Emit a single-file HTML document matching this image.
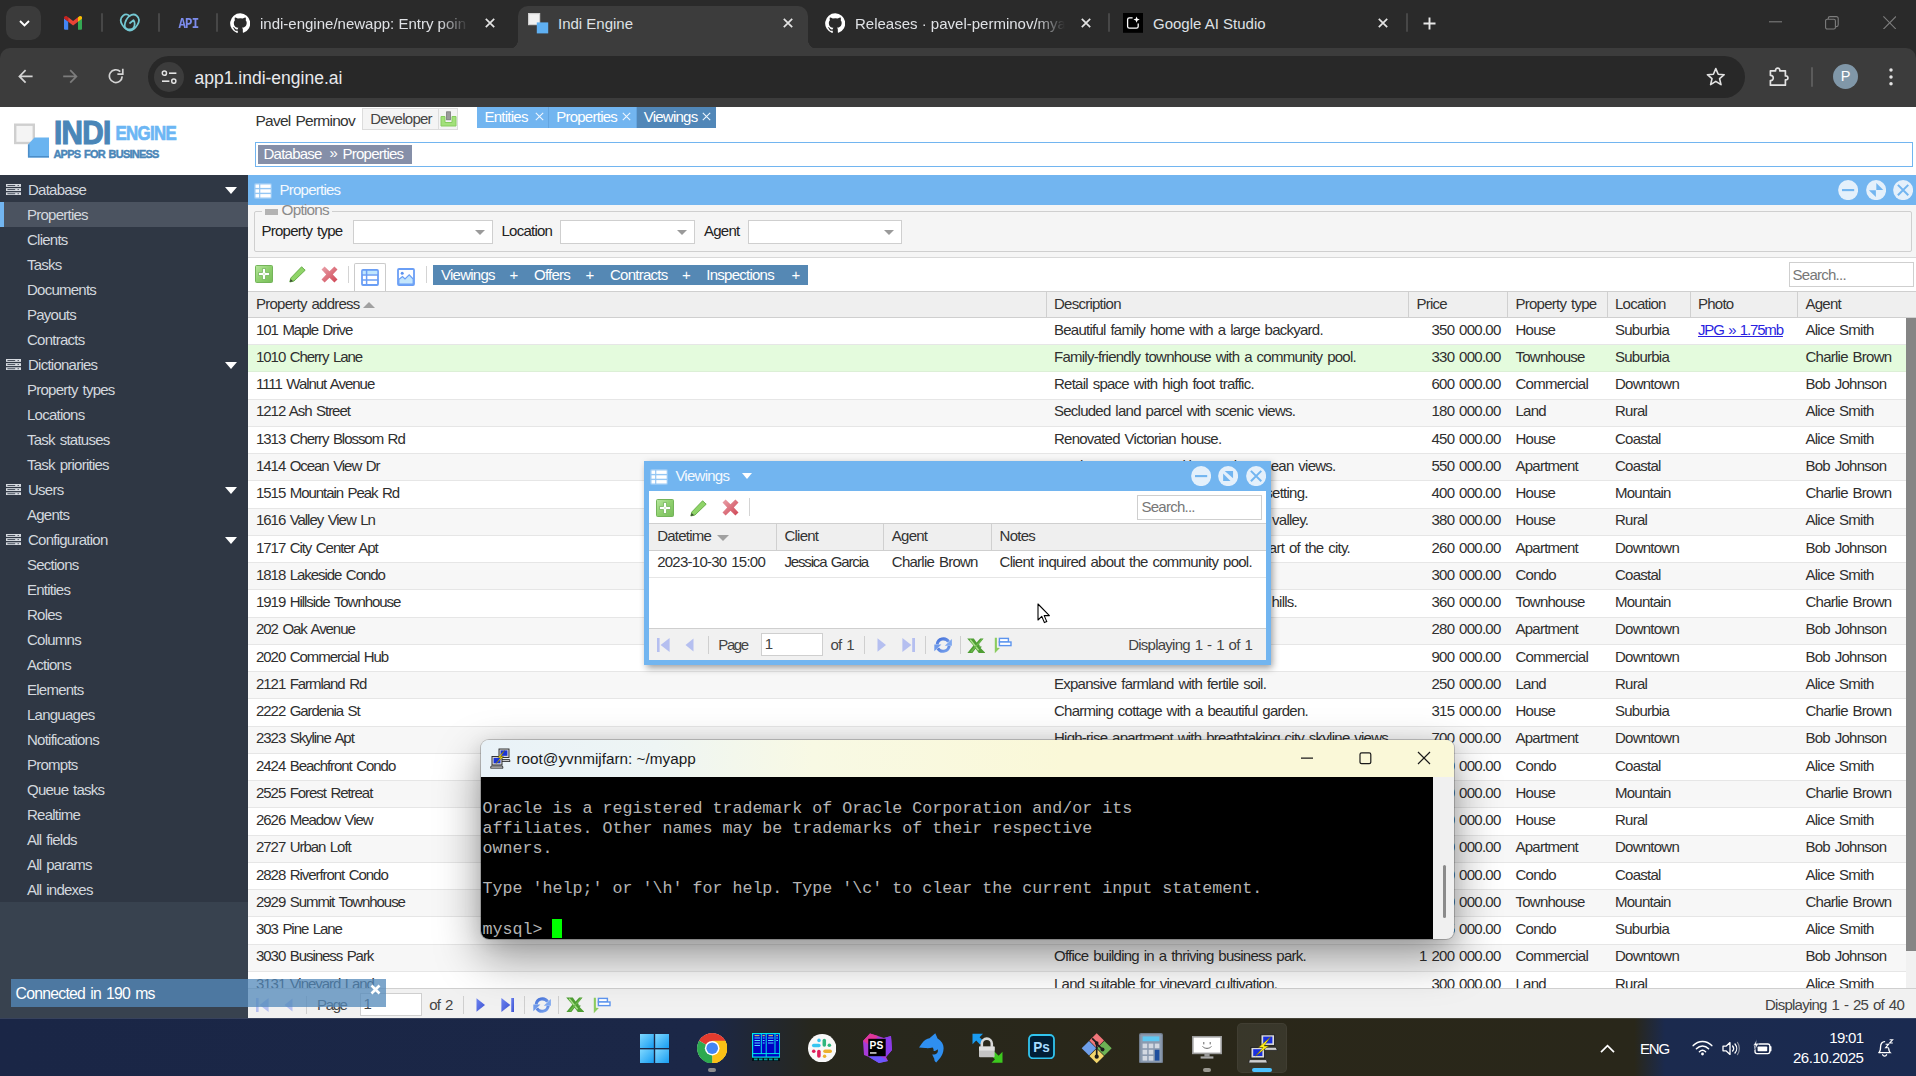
<!DOCTYPE html>
<html><head><meta charset="utf-8"><title>Indi Engine</title><style>*{box-sizing:border-box;margin:0;padding:0}
html,body{width:1916px;height:1076px;overflow:hidden;background:#fff;font-family:"Liberation Sans",sans-serif}
body{position:relative}
.abs{position:absolute}
/* ---------- chrome ---------- */
#tabstrip{position:absolute;left:0;top:0;width:1916px;height:62px;background:#2a2a2a}
#toolbar{position:absolute;left:0;top:48px;width:1916px;height:58.6px;background:#3c3c3c;border-radius:10px 10px 0 0}
#omni{position:absolute;left:148px;top:8.2px;width:1597px;height:41.6px;border-radius:21px;background:#282828}
.tabt{position:absolute;top:15px;font-size:15px;color:#dfe1e5;white-space:nowrap;line-height:18px}
#atab{position:absolute;left:518px;top:5.5px;width:290px;height:43px;background:#3c3c3c;border-radius:10px 10px 0 0}
#atab:before,#atab:after{content:"";position:absolute;bottom:0;width:10px;height:10px}
#atab:before{left:-10px;background:radial-gradient(circle at 0 0,transparent 10px,#3c3c3c 10.5px)}
#atab:after{right:-10px;background:radial-gradient(circle at 100% 0,transparent 10px,#3c3c3c 10.5px)}
.tsep{position:absolute;top:12.8px;width:2px;height:19.4px;background:#474747;border-radius:1px}
.tx{position:absolute;top:16px;width:14px;height:14px}
/* ---------- app ---------- */
#app{position:absolute;left:0;top:0;width:1916px;height:1018px;background:#fff;overflow:hidden;font-size:15px;letter-spacing:-0.75px;word-spacing:1.4px;color:#222}
#side{position:absolute;left:0;top:175px;width:248px;height:843px;background:#38424f}
#sidein{position:absolute;left:0;top:0;width:248px;height:727px;background:#2f3744}
.sh,.si{position:absolute;left:0;width:248px;height:25px;line-height:25px;color:#d3d8de;white-space:nowrap}
.sh span{position:absolute;left:28px;top:0}
.si span{position:absolute;left:27px;top:0}
.shi{position:absolute;left:6px;top:7px}
.tri{position:absolute;left:225px;top:10px;width:0;height:0;border-left:6px solid transparent;border-right:6px solid transparent;border-top:7px solid #fff}
.ssel{background:#4b5360;border-left:4px solid #72b5f0}
.ssel span{left:23px}
#main{position:absolute;left:248px;top:175px;width:1668px;height:843px;background:#fff}
#ttl{position:absolute;left:0;top:0;width:1668px;height:29.8px;background:#72b5f0;color:#fff}
#opts{position:absolute;left:0;top:30px;width:1668px;height:54px;background:#f5f5f5}
#tb{position:absolute;left:0;top:82px;width:1668px;height:35px;background:#fff;border-top:1px solid #d8d8d8}
#gh{position:absolute;left:0;top:116px;width:1668px;height:27px;background:#efefef;border-top:1px solid #cfcfcf;border-bottom:1px solid #cfcfcf}
#gh span{position:absolute;top:-0.9px;line-height:25px;white-space:nowrap;color:#333}
#gh i{position:absolute;top:0;width:1px;height:25px;background:#d0d0d0}
#grid{position:absolute;left:0;top:142.5px;width:1658px;height:670.5px;overflow:hidden;background:#fff}
.row{position:absolute;left:0;width:1658px;height:27.25px;border-bottom:1px solid #e6e6e6;background:#fff}
.row.alt{background:#f7f7f7}
.row.sel{background:#e4fbdd;border-bottom-color:#dcefd6}
.c{position:absolute;top:-1.35px;line-height:26px;white-space:nowrap;color:#2f2f2f}
.lnk{color:#2a1fe0;text-decoration:underline}
#vsb{position:absolute;left:1658px;top:143px;width:10px;height:670px;background:#f1f1f1}
#vsb div{position:absolute;left:0;top:0;width:10px;height:633.3px;background:#858585}
#pg{position:absolute;left:0;top:813px;width:1668px;height:30px;background:#f1f1f1;border-top:1px solid #cfcfcf}
/* ---------- taskbar ---------- */
#task{position:absolute;left:0;top:1018px;width:1916px;height:58px;box-shadow:inset 0 1px 0 rgba(255,255,255,0.13);background:linear-gradient(90deg,#1a2646 0%,#1b2747 37%,#27271d 42.5%,#2a2719 60%,#29271a 85.3%,#1b2a4e 86.9%,#1a2a50 100%)}

#tabstrip{z-index:5}#toolbar{z-index:6}
/* header */
#hdr{position:absolute;left:0;top:0;width:1916px;height:175px}
#hdr .t{position:absolute;white-space:nowrap;line-height:20px}
#devbtn{position:absolute;left:362.2px;top:108px;width:96px;height:22px;background:#f4f4f4;border:1px solid #dcdcdc}
#devbtn i{position:absolute;left:75px;top:0;width:1px;height:20px;background:#dcdcdc}
.atab{position:absolute;top:107px;height:21px;background:#72b5f0;color:#fff;line-height:20px;white-space:nowrap;border-right:1px solid #63a5e0}
.atab b{font-weight:normal;position:absolute;top:0}
#bc{position:absolute;left:255px;top:142px;width:1658px;height:25px;border:1px solid #72b5f0;background:#fff}
#bcchip{position:absolute;left:257.5px;top:144.5px;width:154px;height:19.5px;background:#858fa8;color:#fff;line-height:19px;white-space:nowrap}
/* title bar */
#ttl span{position:absolute;left:31.5px;top:0;line-height:29px;color:#f4f9fe}
.wbtn{position:absolute;width:19px;height:19px}
/* options */
#fs{position:absolute;left:6px;top:36px;width:1658px;height:41px;border:1px solid #cfcfcf;border-radius:2px}
#opts .lb{position:absolute;top:46px;line-height:20px;white-space:nowrap;color:#222}
.cmb{position:absolute;top:45px;height:24px;background:#fff;border:1px solid #cfcfcf}
.cmb i{position:absolute;right:7px;top:9px;width:0;height:0;border-left:5.5px solid transparent;border-right:5.5px solid transparent;border-top:5.5px solid #9a9a9a}
/* toolbar */
.sep{position:absolute;width:1px;background:#d4d4d4}
#chip{position:absolute;left:185px;top:6.5px;width:375px;height:20.2px;background:#5588b4;color:#fff;line-height:19px;white-space:nowrap}
#chip span{position:absolute;top:0}
.srch{position:absolute;background:#fff;border:1px solid #cfcfcf;color:#777;white-space:nowrap}

/* viewings window */
#vw{position:absolute;left:644px;top:461px;width:627px;height:204px;background:#72b5f0;box-shadow:1.5px 3px 7px rgba(0,0,0,0.38);z-index:10}
#vwb{position:absolute;left:5px;top:30px;width:617px;height:169px;background:#fff}
#vgh{position:absolute;left:5px;top:62px;width:617px;height:27.5px;background:#efefef;border-top:1px solid #cfcfcf;border-bottom:1px solid #cfcfcf}
#vgh span{position:absolute;top:-0.9px;line-height:25px;white-space:nowrap;color:#333}
#vgh i{position:absolute;top:0;width:1px;height:25.5px;background:#d0d0d0}
#vrow{position:absolute;left:5px;top:89.5px;width:617px;height:27px;border-bottom:1px solid #e6e6e6}
#vrow span{position:absolute;top:-1.4px;line-height:25px;white-space:nowrap;color:#2f2f2f}
#vpg{position:absolute;left:5px;top:167.4px;width:617px;height:31.6px;background:#f1f1f1;border-top:1px solid #cfcfcf}
#note{position:absolute;left:11px;top:979px;width:375px;height:28px;background:rgba(84,138,186,0.76);z-index:12}

/* putty */
#pty{position:absolute;left:480.5px;top:739.5px;width:973.5px;height:199.5px;border-radius:8px;background:#f0f0f0;overflow:hidden;z-index:20;box-shadow:0 0 0 1px rgba(0,0,0,0.2),0 18px 46px rgba(0,0,0,0.40),0 3px 18px rgba(0,0,0,0.10)}
#ptyt{position:absolute;left:0;top:0;width:974px;height:37.3px;background:linear-gradient(90deg,#e9f2f8 0%,#eef5f4 18%,#f8f9e4 34%,#faf8d8 60%,#faf8d8 100%)}
#ptyb{position:absolute;left:0;top:37.3px;width:952.7px;height:163px;background:#000;overflow:hidden}
#ptyb pre{position:absolute;left:2px;top:2.1px;margin:0;font-family:"Liberation Mono",monospace;font-size:16.67px;line-height:20px;color:#b4b4b4;letter-spacing:0}
#ptyb pre i{display:inline-block;width:10px;height:19px;background:#00ff00;vertical-align:-4px}

.tt{position:absolute;font-size:15px;line-height:20px;color:#fff;white-space:nowrap}
</style></head>
<body>
<div id="tabstrip">
<div id="atab"></div>
<div class="abs" style="left:6px;top:6px;width:34.6px;height:33.8px;border-radius:10px;background:#3b3b3b"></div>
<svg class="abs" style="left:18.5px;top:20px" width="11" height="7" viewBox="0 0 11 7"><path d="M1 1L5.5 5.4L10 1" fill="none" stroke="#fff" stroke-width="1.9"/></svg>
<svg class="abs" style="left:64px;top:15.8px" width="18.2" height="14" viewBox="0 0 18.2 14"><path d="M0 2.2V12.6A1.2 1.2 0 0 0 1.2 13.8H4.2V5.4Z" fill="#4285f4"/><path d="M18.2 2.2V12.6A1.2 1.2 0 0 1 17 13.8H14V5.4Z" fill="#34a853"/><path d="M14 1.3V5.8L18.2 2.6V1.9C18.2 0.2 16.300 -0.500 15.100 0.400Z" fill="#fbbc04"/><path d="M4.200 1.300V5.800L0 2.600V1.900C0 0.200 1.900 -0.500 3.100 0.400Z" fill="#c5221f"/><path d="M4.200 1.300L9.100 5L14 1.300V5.800L9.100 9.500L4.200 5.800Z" fill="#ea4335"/></svg>
<i class="tsep" style="left:101.4px"></i>
<svg class="abs" style="left:119.3px;top:13.1px" width="21.6" height="19.8" viewBox="-0.8 -0.9 21.6 19.8"><g fill="none" stroke="#74c8d3" stroke-width="1.75" stroke-linecap="round" stroke-linejoin="round"><path d="M9.7 2C8 0.5 5.2 0.2 3.2 1.8C0.600 3.900 0.400 7.600 2.500 11C4.600 14.300 7.600 16.700 10.100 16.700C12.600 16.700 15.600 14.300 17.600 11C19.700 7.600 19.500 3.900 16.900 1.800C14.900 0.200 12 0.500 9.700 2"/><path d="M9.700 2C7.400 4 5.300 7.800 4.900 11.300C4.700 14.200 7.200 15.600 10.100 15.600C12.900 15.600 14.700 13.600 14.900 10.200C14.900 8.700 14.600 7.300 13.700 6.300L10.200 9.100"/></g></svg>
<i class="tsep" style="left:158.4px"></i>
<span class="abs" style="left:178.4px;top:17px;font-family:'Liberation Mono',monospace;font-weight:bold;font-size:12.4px;line-height:17px;color:#7d8cec;letter-spacing:-0.75px;transform:scaleY(1.12);transform-origin:0 50%">API</span>
<i class="tsep" style="left:216.4px"></i>
<svg class="abs" style="left:229.7px;top:12.8px" width="20.6" height="20.2" viewBox="0 0 24 24"><path fill="#fff" d="M12 .3a12 12 0 0 0-3.8 23.4c.6.1.8-.3.8-.6v-2c-3.3.7-4-1.6-4-1.6-.6-1.4-1.400-1.800-1.400-1.800-1-.7.100-.7.100-.7 1.200.1 1.800 1.200 1.800 1.200 1 1.800 2.800 1.300 3.500 1 .100-.8.400-1.300.800-1.600-2.700-.300-5.500-1.300-5.500-6 0-1.200.500-2.300 1.300-3.100-.200-.400-.600-1.600 0-3.200 0 0 1-.300 3.400 1.200a11.500 11.500 0 0 1 6 0c2.300-1.500 3.300-1.200 3.300-1.200.700 1.700.200 2.900.100 3.200.800.800 1.200 1.900 1.200 3.100 0 4.600-2.800 5.600-5.500 5.900.500.400.900 1.100.900 2.200v3.300c0 .300.100.700.800.600A12 12 0 0 0 12 .3"/></svg>
<svg class="abs" style="left:485.3px;top:18.2px" width="10" height="10" viewBox="0 0 10 10"><path d="M0.8 0.8L9.2 9.2M9.2 0.8L0.8 9.2" stroke="#e3e3e3" stroke-width="1.7" fill="none"/></svg>
<svg class="abs" style="left:527.5px;top:12.5px" width="21" height="21" viewBox="0 0 21 21"><rect x="0.6" y="0.6" width="11" height="11" fill="#f1f1f1" stroke="#cfcfcf" stroke-width="1.2"/><rect x="8.8" y="9.4" width="11.400" height="11" fill="#5fb0f2"/></svg>
<svg class="abs" style="left:782.8px;top:18.2px" width="10" height="10" viewBox="0 0 10 10"><path d="M0.8 0.8L9.2 9.2M9.2 0.8L0.8 9.2" stroke="#e3e3e3" stroke-width="1.7" fill="none"/></svg>
<svg class="abs" style="left:824.7px;top:12.8px" width="20.6" height="20.2" viewBox="0 0 24 24"><path fill="#fff" d="M12 .3a12 12 0 0 0-3.8 23.4c.6.1.8-.3.8-.6v-2c-3.3.7-4-1.6-4-1.6-.6-1.4-1.400-1.800-1.400-1.800-1-.7.100-.7.100-.7 1.200.1 1.800 1.200 1.800 1.200 1 1.800 2.800 1.300 3.500 1 .100-.8.400-1.300.800-1.600-2.700-.300-5.500-1.300-5.500-6 0-1.200.500-2.300 1.300-3.100-.200-.400-.600-1.600 0-3.200 0 0 1-.300 3.400 1.200a11.500 11.500 0 0 1 6 0c2.300-1.500 3.300-1.200 3.300-1.200.700 1.700.200 2.900.100 3.200.800.800 1.200 1.900 1.200 3.100 0 4.600-2.800 5.600-5.500 5.900.500.400.900 1.100.900 2.200v3.300c0 .300.100.700.800.600A12 12 0 0 0 12 .3"/></svg>
<svg class="abs" style="left:1081px;top:18.2px" width="10" height="10" viewBox="0 0 10 10"><path d="M0.8 0.8L9.2 9.2M9.2 0.8L0.8 9.2" stroke="#e3e3e3" stroke-width="1.7" fill="none"/></svg>
<i class="tsep" style="left:1108.3px"></i>
<svg class="abs" style="left:1122.7px;top:12.9px" width="20.3" height="19.8" viewBox="0 0 20.3 19.8"><rect width="20.3" height="19.8" fill="#000"/><path d="M9.600 4.800H6.400A1.800 1.800 0 0 0 4.600 6.600V13.400A1.800 1.800 0 0 0 6.400 15.200H13.400A1.800 1.800 0 0 0 15.200 13.400V10.600" fill="none" stroke="#fff" stroke-width="1.300"/><path d="M13.600 3.400L14.500 5.700L16.800 6.600L14.500 7.500L13.600 9.800L12.700 7.500L10.400 6.600L12.700 5.700Z" fill="#fff"/></svg>
<svg class="abs" style="left:1378px;top:18.2px" width="10" height="10" viewBox="0 0 10 10"><path d="M0.8 0.8L9.2 9.2M9.2 0.8L0.8 9.2" stroke="#e3e3e3" stroke-width="1.7" fill="none"/></svg>
<i class="tsep" style="left:1406.4px"></i>
<svg class="abs" style="left:1422.5px;top:17px" width="13" height="13" viewBox="0 0 13 13"><path d="M6.500 0.500V12.500M0.500 6.500H12.500" stroke="#e8e8e8" stroke-width="1.900" fill="none"/></svg>
<svg class="abs" style="left:1768.8px;top:21px" width="13.4" height="2" viewBox="0 0 13.4 2"><path d="M0 0.800H13.400" stroke="#7d7d7d" stroke-width="1.100"/></svg>
<svg class="abs" style="left:1824.6px;top:15.6px" width="14" height="14" viewBox="0 0 14 14"><rect x="0.600" y="3.200" width="9.800" height="9.800" rx="1.600" fill="none" stroke="#7d7d7d" stroke-width="1.100"/><path d="M3.200 3V2.400A1.800 1.800 0 0 1 5 0.600H11.400A1.800 1.800 0 0 1 13.200 2.400V8.800A1.800 1.800 0 0 1 11.400 10.600H10.800" fill="none" stroke="#7d7d7d" stroke-width="1.100"/></svg>
<svg class="abs" style="left:1882.8px;top:15.8px" width="13.4" height="13.6" viewBox="0 0 13.4 13.6"><path d="M0.400 0.400L13 13.200M13 0.400L0.400 13.200" stroke="#7d7d7d" stroke-width="1.100" fill="none"/></svg>
<span class="tabt" style="left:260px;width:209px;overflow:hidden;-webkit-mask-image:linear-gradient(90deg,#000 86%,transparent 100%)">indi-engine/newapp: Entry poin</span>
<span class="tabt" style="left:558px">Indi Engine</span>
<span class="tabt" style="left:855px;width:210px;overflow:hidden;-webkit-mask-image:linear-gradient(90deg,#000 86%,transparent 100%)">Releases · pavel-perminov/mya</span>
<span class="tabt" style="left:1153px">Google AI Studio</span>
</div>
<div id="toolbar">
<div id="omni"></div>
<svg class="abs" style="left:18.3px;top:21.400000000000006px" width="14.8" height="14.8" viewBox="0 0 14.8 14.8"><path d="M14.600 7.400H1.600M7.600 1.200L1.400 7.400L7.600 13.600" fill="none" stroke="#d4d4d4" stroke-width="1.700"/></svg>
<svg class="abs" style="left:63px;top:21.400000000000006px" width="14.8" height="14.8" viewBox="0 0 14.8 14.8"><path d="M0.200 7.400H13.200M7.200 1.200L13.400 7.400L7.200 13.600" fill="none" stroke="#7c7c7c" stroke-width="1.700"/></svg>
<svg class="abs" style="left:107.6px;top:20.400000000000006px" width="16.2" height="16" viewBox="0 0 16.2 16"><path d="M14.200 8.400A6.400 6.400 0 1 1 12.300 3.600" fill="none" stroke="#d4d4d4" stroke-width="1.700"/><path d="M14.800 0.800V6.200H9.400" fill="none" stroke="#d4d4d4" stroke-width="1.700"/></svg>
<div class="abs" style="left:154.200px;top:14.100000000000001px;width:30px;height:30px;border-radius:15px;background:#3c3c3c"></div>
<svg class="abs" style="left:161px;top:22px" width="16.4" height="14.4" viewBox="0 0 16.4 14.4"><circle cx="3.400" cy="3.200" r="2.100" fill="none" stroke="#e3e3e3" stroke-width="1.500"/><path d="M8 3.200H15.400" stroke="#e3e3e3" stroke-width="1.600"/><circle cx="12.800" cy="11.200" r="2.100" fill="none" stroke="#e3e3e3" stroke-width="1.500"/><path d="M1 11.200H8.400" stroke="#e3e3e3" stroke-width="1.600"/></svg>
<svg class="abs" style="left:1705.6px;top:19.400000000000006px" width="19.6" height="19" viewBox="0 0 19.6 19"><path d="M9.800 1.600L12.200 7.200L18.200 7.700L13.600 11.700L15 17.600L9.800 14.400L4.600 17.600L6 11.700L1.400 7.700L7.400 7.200Z" fill="none" stroke="#e3e3e3" stroke-width="1.600" stroke-linejoin="round"/></svg>
<svg class="abs" style="left:1769px;top:18.200000000000003px" width="21.4" height="20.4" viewBox="0 0 21.4 20.4"><path d="M1.400 4.800H6.600C6 1.200 11.400 1.200 10.800 4.800H16.400V10C19.800 9.400 19.800 14.400 16.400 13.800V19.200H1.400V14.600C5.200 15 5.200 9 1.400 9.400Z" fill="none" stroke="#e3e3e3" stroke-width="1.700" stroke-linejoin="round"/></svg>
<div class="abs" style="left:1810.6px;top:19px;width:2px;height:20px;border-radius:1px;background:#5b5b5b"></div>
<div class="abs" style="left:1833px;top:16px;width:25px;height:25px;border-radius:12.500px;background:#8097a8;color:#fff;font-size:14.500px;line-height:25px;text-align:center">P</div>
<svg class="abs" style="left:1888.6px;top:19.799999999999997px" width="4" height="18" viewBox="0 0 4 18"><circle cx="2" cy="2" r="1.750" fill="#e3e3e3"/><circle cx="2" cy="8.900" r="1.750" fill="#e3e3e3"/><circle cx="2" cy="15.800" r="1.750" fill="#e3e3e3"/></svg>
<span class="abs" style="left:194.5px;top:18.5px;font-size:17.5px;color:#e8eaed;line-height:22px;white-space:nowrap">app1.indi-engine.ai</span>
</div>
<div id="app">
<div id="hdr">
<svg class="abs" style="left:0;top:107px" width="250" height="68" viewBox="0 107 250 68">
<rect x="15.2" y="124.7" width="18.6" height="18.3" fill="#f4f4f4" stroke="#cfcfcf" stroke-width="2.4"/>
<path d="M34.5 137.5H49V157.5H28V144.5Z" fill="#6ab4f0"/>
<path d="M28.7 144.5V156.8H49" fill="none" stroke="#4c8ec8" stroke-width="1.6"/>
<text x="53.9" y="144.2" font-family="Liberation Sans" font-weight="bold" font-size="32.8" fill="#4a86b8" stroke="#4a86b8" stroke-width="1.2" textLength="56.6" lengthAdjust="spacingAndGlyphs">INDI</text>
<text x="115.4" y="140.05" font-family="Liberation Sans" font-weight="bold" font-size="20" fill="#6cb6f4" stroke="#6cb6f4" stroke-width="0.7" textLength="60.7" lengthAdjust="spacingAndGlyphs">ENGINE</text>
<text x="53.4" y="157.5" font-family="Liberation Sans" font-weight="bold" font-size="11.2" fill="#4a86b8" stroke="#4a86b8" stroke-width="0.45" textLength="105.3" lengthAdjust="spacingAndGlyphs">APPS FOR BUSINESS</text>
</svg>
<span class="t" style="left:255.5px;top:110.5px;font-size:15.5px;color:#333">Pavel Perminov</span>
<div id="devbtn"><span class="t" style="left:7px;top:0;color:#444">Developer</span><i></i>
<svg class="abs" style="left:77px;top:2px" width="17" height="16" viewBox="0 0 17 16"><path d="M1 5.5H5V11.5H12V5.5H16V15H1Z" fill="#a2e07a" stroke="#86cc5e" stroke-width="1"/><rect x="6.6" y="0.8" width="3.8" height="8" fill="#9a9a9a" stroke="#777" stroke-width="0.8"/></svg>
</div>
<div class="atab" style="left:477px;width:71.5px"><b style="left:7.5px">Entities</b><svg class="abs" style="left:57.5px;top:5px" width="9" height="9" viewBox="0 0 9 9"><path d="M0.8 0.8L8.2 8.2M8.2 0.8L0.8 8.2" stroke="#eef6fe" stroke-width="1.1"/></svg></div>
<div class="atab" style="left:548.5px;width:88px"><b style="left:7.7px">Properties</b><svg class="abs" style="left:73.5px;top:5px" width="9" height="9" viewBox="0 0 9 9"><path d="M0.8 0.8L8.2 8.2M8.2 0.8L0.8 8.2" stroke="#eef6fe" stroke-width="1.1"/></svg></div>
<div class="atab" style="left:636.5px;width:79.5px;background:#5187b8;border-right:0"><b style="left:7.2px">Viewings</b><svg class="abs" style="left:65.5px;top:5px" width="9" height="9" viewBox="0 0 9 9"><path d="M0.8 0.8L8.2 8.2M8.2 0.8L0.8 8.2" stroke="#eef6fe" stroke-width="1.1"/></svg></div>
<div id="bc"></div>
<div id="bcchip"><span class="abs" style="left:6px;top:-1px">Database</span><span class="abs" style="left:72px;top:-2px">»</span><span class="abs" style="left:85px;top:-1px">Properties</span></div>
</div>
<div id="side"><div id="sidein"></div>
<div class="sh" style="top:2px"><svg class="shi" width="15.2" height="11.2" viewBox="0 0 15.2 11.2"><g fill="#d6dae0"><rect x="0" y="0" width="15.2" height="2.9"/><rect x="0" y="4.15" width="15.2" height="2.9"/><rect x="0" y="8.3" width="15.2" height="2.9"/></g><g fill="#3a4250"><rect x="1.4" y="1" width="7.8" height="0.9"/><rect x="1.4" y="5.15" width="7.8" height="0.9"/><rect x="1.4" y="9.3" width="7.8" height="0.9"/><rect x="11.6" y="1" width="1.3" height="0.9"/><rect x="11.6" y="5.15" width="1.3" height="0.9"/><rect x="11.6" y="9.3" width="1.3" height="0.9"/></g></svg><span>Database</span><i class="tri"></i></div>
<div class="si ssel" style="top:27px"><span>Properties</span></div>
<div class="si" style="top:52px"><span>Clients</span></div>
<div class="si" style="top:77px"><span>Tasks</span></div>
<div class="si" style="top:102px"><span>Documents</span></div>
<div class="si" style="top:127px"><span>Payouts</span></div>
<div class="si" style="top:152px"><span>Contracts</span></div>
<div class="sh" style="top:177px"><svg class="shi" width="15.2" height="11.2" viewBox="0 0 15.2 11.2"><g fill="#d6dae0"><rect x="0" y="0" width="15.2" height="2.9"/><rect x="0" y="4.15" width="15.2" height="2.9"/><rect x="0" y="8.3" width="15.2" height="2.9"/></g><g fill="#3a4250"><rect x="1.4" y="1" width="7.8" height="0.9"/><rect x="1.4" y="5.15" width="7.8" height="0.9"/><rect x="1.4" y="9.3" width="7.8" height="0.9"/><rect x="11.6" y="1" width="1.3" height="0.9"/><rect x="11.6" y="5.15" width="1.3" height="0.9"/><rect x="11.6" y="9.3" width="1.3" height="0.9"/></g></svg><span>Dictionaries</span><i class="tri"></i></div>
<div class="si" style="top:202px"><span>Property types</span></div>
<div class="si" style="top:227px"><span>Locations</span></div>
<div class="si" style="top:252px"><span>Task statuses</span></div>
<div class="si" style="top:277px"><span>Task priorities</span></div>
<div class="sh" style="top:302px"><svg class="shi" width="15.2" height="11.2" viewBox="0 0 15.2 11.2"><g fill="#d6dae0"><rect x="0" y="0" width="15.2" height="2.9"/><rect x="0" y="4.15" width="15.2" height="2.9"/><rect x="0" y="8.3" width="15.2" height="2.9"/></g><g fill="#3a4250"><rect x="1.4" y="1" width="7.8" height="0.9"/><rect x="1.4" y="5.15" width="7.8" height="0.9"/><rect x="1.4" y="9.3" width="7.8" height="0.9"/><rect x="11.6" y="1" width="1.3" height="0.9"/><rect x="11.6" y="5.15" width="1.3" height="0.9"/><rect x="11.6" y="9.3" width="1.3" height="0.9"/></g></svg><span>Users</span><i class="tri"></i></div>
<div class="si" style="top:327px"><span>Agents</span></div>
<div class="sh" style="top:352px"><svg class="shi" width="15.2" height="11.2" viewBox="0 0 15.2 11.2"><g fill="#d6dae0"><rect x="0" y="0" width="15.2" height="2.9"/><rect x="0" y="4.15" width="15.2" height="2.9"/><rect x="0" y="8.3" width="15.2" height="2.9"/></g><g fill="#3a4250"><rect x="1.4" y="1" width="7.8" height="0.9"/><rect x="1.4" y="5.15" width="7.8" height="0.9"/><rect x="1.4" y="9.3" width="7.8" height="0.9"/><rect x="11.6" y="1" width="1.3" height="0.9"/><rect x="11.6" y="5.15" width="1.3" height="0.9"/><rect x="11.6" y="9.3" width="1.3" height="0.9"/></g></svg><span>Configuration</span><i class="tri"></i></div>
<div class="si" style="top:377px"><span>Sections</span></div>
<div class="si" style="top:402px"><span>Entities</span></div>
<div class="si" style="top:427px"><span>Roles</span></div>
<div class="si" style="top:452px"><span>Columns</span></div>
<div class="si" style="top:477px"><span>Actions</span></div>
<div class="si" style="top:502px"><span>Elements</span></div>
<div class="si" style="top:527px"><span>Languages</span></div>
<div class="si" style="top:552px"><span>Notifications</span></div>
<div class="si" style="top:577px"><span>Prompts</span></div>
<div class="si" style="top:602px"><span>Queue tasks</span></div>
<div class="si" style="top:627px"><span>Realtime</span></div>
<div class="si" style="top:652px"><span>All fields</span></div>
<div class="si" style="top:677px"><span>All params</span></div>
<div class="si" style="top:702px"><span>All indexes</span></div>
</div>
<div id="main">
<div id="ttl"><svg class="abs" style="left:6.3px;top:8px" width="18" height="16" viewBox="0 0 18 16"><rect x="0" y="0" width="18" height="16" rx="2" fill="#fff" fill-opacity="0.25"/><g fill="#fff"><rect x="1.5" y="1.5" width="3.6" height="3.4"/><rect x="6.3" y="1.5" width="10.4" height="3.4"/><rect x="1.5" y="6.3" width="3.6" height="3.4"/><rect x="6.3" y="6.3" width="10.4" height="3.4"/><rect x="1.5" y="11.1" width="3.6" height="3.4"/><rect x="6.3" y="11.1" width="10.4" height="3.4"/></g></svg><span>Properties</span><svg class="abs" style="left:1589.8px;top:4.900000000000006px" width="20.2" height="20.2" viewBox="0 0 20.2 20.2"><circle cx="10.1" cy="10.1" r="10.0" fill="#e4f0fb"/><rect x="4.00" y="9.05" width="12.2" height="2.1" fill="#72b5f0"/></svg><svg class="abs" style="left:1617.8px;top:4.900000000000006px" width="20.2" height="20.2" viewBox="0 0 20.2 20.2"><circle cx="10.1" cy="10.1" r="10.0" fill="#e4f0fb"/><path d="M10.30 3.10L17.30 9.90H10.30Z" fill="#72b5f0"/><path d="M9.90 17.10L2.90 10.30H9.90Z" fill="#72b5f0"/></svg><svg class="abs" style="left:1645px;top:4.900000000000006px" width="20.2" height="20.2" viewBox="0 0 20.2 20.2"><circle cx="10.1" cy="10.1" r="10.0" fill="#e4f0fb"/><path d="M4.90 4.90L15.30 15.30M15.30 4.90L4.90 15.30" stroke="#72b5f0" stroke-width="2" fill="none"/></svg></div>
<div id="opts" style="top:0;height:84px;background:none"><div class="abs" style="left:0;top:30px;width:1668px;height:54px;background:#f5f5f5"></div><div id="fs"></div>
<div class="abs" style="left:14px;top:30px;width:70px;height:14px;background:#f5f5f5"></div>
<div class="abs" style="left:17px;top:33.5px;width:12.5px;height:6.5px;background:#b3b3b3"></div>
<span class="lb" style="left:33.5px;top:25px;font-size:15.3px;color:#8a8a8a">Options</span>
<span class="lb" style="left:13.5px">Property type</span><div class="cmb" style="left:104.5px;width:140.5px"><i></i></div>
<span class="lb" style="left:253.5px">Location</span><div class="cmb" style="left:312.3px;width:134.5px"><i></i></div>
<span class="lb" style="left:456px">Agent</span><div class="cmb" style="left:500.3px;width:153.5px"><i></i></div>
</div>
<div id="tb"><svg class="abs" style="left:7px;top:7.2px" width="18" height="18" viewBox="0 0 18 18"><defs><linearGradient id="ga" x1="0" y1="0" x2="1" y2="1"><stop offset="0" stop-color="#b9e8a0"/><stop offset="0.5" stop-color="#8fd06e"/><stop offset="1" stop-color="#78bd5a"/></linearGradient></defs><rect x="0.5" y="0.5" width="17" height="17" rx="1" fill="url(#ga)" stroke="#74b45a"/><path d="M7.5 3.5H10.5V7.5H14.5V10.5H10.5V14.5H7.500V10.5H3.500V7.500H7.500Z" fill="#fff" stroke="#6aad52" stroke-width="0.7"/><rect x="8.3" y="8.3" width="1.4" height="1.4" fill="#b5e29e"/></svg><svg class="abs" style="left:40.5px;top:8px" width="17" height="17" viewBox="0 0 17 17"><path d="M0.8 16L1.8 12L12.6 0.8L16.2 4.2L5 15Z" fill="#8fd468" stroke="#62a843" stroke-width="0.9"/><path d="M0.8 16L1.6 13L4 15.2Z" fill="#3c4a34"/></svg><svg class="abs" style="left:72.8px;top:7.5px" width="17" height="17" viewBox="0 0 17 17"><defs><linearGradient id="gd" x1="0" y1="0" x2="1" y2="1"><stop offset="0" stop-color="#e9a3ab"/><stop offset="1" stop-color="#cf4453"/></linearGradient></defs><path d="M3.6 0.5L8.5 5.2L13.4 0.5L16.5 3.6L11.8 8.5L16.5 13.4L13.4 16.5L8.5 11.8L3.6 16.5L0.5 13.4L5.2 8.5L0.5 3.6Z" fill="url(#gd)"/></svg><div class="sep" style="left:100px;top:8px;height:17px"></div><div class="abs" style="left:106px;top:5px;width:31.8px;height:30px;border:1px solid #cbcbcb;border-bottom:0;border-radius:2px 2px 0 0;background:#fff"></div><svg class="abs" style="left:113px;top:10.5px" width="18" height="17" viewBox="0 0 18 17"><rect x="1" y="1" width="16" height="15" rx="1" fill="#fff" stroke="#6a9ef5" stroke-width="1.8"/><rect x="1.8" y="1.8" width="14.4" height="3.6" fill="#bfe6fd"/><path d="M1 6H17M1 11H17M5.6 1V16" stroke="#6a9ef5" stroke-width="1.5" fill="none"/></svg><svg class="abs" style="left:149px;top:9.5px" width="18" height="18" viewBox="0 0 18 18"><rect x="1" y="1" width="16" height="16" rx="1" fill="#fff" stroke="#6a9ef5" stroke-width="1.8"/><path d="M1.8 11.5L5.5 8.5L8 11L12.2 6.8L16.2 11V16.2H1.8Z" fill="#c4e6fc" stroke="#6a9ef5" stroke-width="1.2"/><circle cx="5.2" cy="5.2" r="1.5" fill="#5b93f0"/></svg><div class="sep" style="left:178.3px;top:8px;height:17px"></div><div id="chip"><span style="left:8px">Viewings</span><span style="left:76.5px">+</span><span style="left:101px">Offers</span><span style="left:152.5px">+</span><span style="left:177px">Contracts</span><span style="left:249px">+</span><span style="left:273.3px">Inspections</span><span style="left:358.5px">+</span></div><div class="srch" style="left:1541px;top:3.5px;width:125px;height:25.4px;line-height:23px;padding-left:2.6px">Search...</div></div>
<div id="gh"><span style="left:8px">Property address</span><svg class="abs" style="left:115px;top:9.5px" width="12" height="6" viewBox="0 0 12 6"><path d="M0 6L6 0L12 6Z" fill="#a0a0a0"/></svg>
<i style="left:798px"></i><span style="left:806px">Description</span>
<i style="left:1159.5px"></i><span style="left:1168.5px">Price</span>
<i style="left:1259px"></i><span style="left:1267.5px">Property type</span>
<i style="left:1359px"></i><span style="left:1367px">Location</span>
<i style="left:1442px"></i><span style="left:1450px">Photo</span>
<i style="left:1548.5px"></i><span style="left:1557.5px">Agent</span></div>
<div id="grid">
<div class="row" style="top:0.45px">
<span class="c" style="left:8px;letter-spacing:-1.05px">101 Maple Drive</span>
<span class="c" style="left:806px">Beautiful family home with a large backyard.</span>
<span class="c" style="right:405.5px">350 000.00</span>
<span class="c" style="left:1267.5px">House</span>
<span class="c" style="left:1367px">Suburbia</span>
<span class="c lnk" style="left:1450px;letter-spacing:-1.15px">JPG » 1.75mb</span>
<span class="c" style="left:1557.5px">Alice Smith</span>
</div>
<div class="row sel" style="top:27.70px">
<span class="c" style="left:8px;letter-spacing:-1.05px">1010 Cherry Lane</span>
<span class="c" style="left:806px">Family-friendly townhouse with a community pool.</span>
<span class="c" style="right:405.5px">330 000.00</span>
<span class="c" style="left:1267.5px">Townhouse</span>
<span class="c" style="left:1367px">Suburbia</span>
<span class="c" style="left:1557.5px">Charlie Brown</span>
</div>
<div class="row" style="top:54.95px">
<span class="c" style="left:8px;letter-spacing:-1.05px">1111 Walnut Avenue</span>
<span class="c" style="left:806px">Retail space with high foot traffic.</span>
<span class="c" style="right:405.5px">600 000.00</span>
<span class="c" style="left:1267.5px">Commercial</span>
<span class="c" style="left:1367px">Downtown</span>
<span class="c" style="left:1557.5px">Bob Johnson</span>
</div>
<div class="row alt" style="top:82.20px">
<span class="c" style="left:8px;letter-spacing:-1.05px">1212 Ash Street</span>
<span class="c" style="left:806px">Secluded land parcel with scenic views.</span>
<span class="c" style="right:405.5px">180 000.00</span>
<span class="c" style="left:1267.5px">Land</span>
<span class="c" style="left:1367px">Rural</span>
<span class="c" style="left:1557.5px">Alice Smith</span>
</div>
<div class="row" style="top:109.45px">
<span class="c" style="left:8px;letter-spacing:-1.05px">1313 Cherry Blossom Rd</span>
<span class="c" style="left:806px">Renovated Victorian house.</span>
<span class="c" style="right:405.5px">450 000.00</span>
<span class="c" style="left:1267.5px">House</span>
<span class="c" style="left:1367px">Coastal</span>
<span class="c" style="left:1557.5px">Alice Smith</span>
</div>
<div class="row alt" style="top:136.70px">
<span class="c" style="left:8px;letter-spacing:-1.05px">1414 Ocean View Dr</span>
<span class="c" style="right:570.5px">Modern apartment with stunning ocean views.</span>
<span class="c" style="right:405.5px">550 000.00</span>
<span class="c" style="left:1267.5px">Apartment</span>
<span class="c" style="left:1367px">Coastal</span>
<span class="c" style="left:1557.5px">Bob Johnson</span>
</div>
<div class="row" style="top:163.95px">
<span class="c" style="left:8px;letter-spacing:-1.05px">1515 Mountain Peak Rd</span>
<span class="c" style="right:598.3px">Cozy cabin in a peaceful mountain setting.</span>
<span class="c" style="right:405.5px">400 000.00</span>
<span class="c" style="left:1267.5px">House</span>
<span class="c" style="left:1367px">Mountain</span>
<span class="c" style="left:1557.5px">Charlie Brown</span>
</div>
<div class="row alt" style="top:191.20px">
<span class="c" style="left:8px;letter-spacing:-1.05px">1616 Valley View Ln</span>
<span class="c" style="right:597.8px">Spacious house overlooking the valley.</span>
<span class="c" style="right:405.5px">380 000.00</span>
<span class="c" style="left:1267.5px">House</span>
<span class="c" style="left:1367px">Rural</span>
<span class="c" style="left:1557.5px">Alice Smith</span>
</div>
<div class="row" style="top:218.45px">
<span class="c" style="left:8px;letter-spacing:-1.05px">1717 City Center Apt</span>
<span class="c" style="right:556px">Compact apartment in the heart of the city.</span>
<span class="c" style="right:405.5px">260 000.00</span>
<span class="c" style="left:1267.5px">Apartment</span>
<span class="c" style="left:1367px">Downtown</span>
<span class="c" style="left:1557.5px">Bob Johnson</span>
</div>
<div class="row alt" style="top:245.70px">
<span class="c" style="left:8px;letter-spacing:-1.05px">1818 Lakeside Condo</span>
<span class="c" style="left:806px">Condo with lake access.</span>
<span class="c" style="right:405.5px">300 000.00</span>
<span class="c" style="left:1267.5px">Condo</span>
<span class="c" style="left:1367px">Coastal</span>
<span class="c" style="left:1557.5px">Alice Smith</span>
</div>
<div class="row" style="top:272.95px">
<span class="c" style="left:8px;letter-spacing:-1.05px">1919 Hillside Townhouse</span>
<span class="c" style="right:609px">Townhouse with views of the rolling hills.</span>
<span class="c" style="right:405.5px">360 000.00</span>
<span class="c" style="left:1267.5px">Townhouse</span>
<span class="c" style="left:1367px">Mountain</span>
<span class="c" style="left:1557.5px">Charlie Brown</span>
</div>
<div class="row alt" style="top:300.20px">
<span class="c" style="left:8px;letter-spacing:-1.05px">202 Oak Avenue</span>
<span class="c" style="left:806px">Modern apartment.</span>
<span class="c" style="right:405.5px">280 000.00</span>
<span class="c" style="left:1267.5px">Apartment</span>
<span class="c" style="left:1367px">Downtown</span>
<span class="c" style="left:1557.5px">Bob Johnson</span>
</div>
<div class="row" style="top:327.45px">
<span class="c" style="left:8px;letter-spacing:-1.05px">2020 Commercial Hub</span>
<span class="c" style="left:806px">Large commercial hub.</span>
<span class="c" style="right:405.5px">900 000.00</span>
<span class="c" style="left:1267.5px">Commercial</span>
<span class="c" style="left:1367px">Downtown</span>
<span class="c" style="left:1557.5px">Bob Johnson</span>
</div>
<div class="row alt" style="top:354.70px">
<span class="c" style="left:8px;letter-spacing:-1.05px">2121 Farmland Rd</span>
<span class="c" style="left:806px">Expansive farmland with fertile soil.</span>
<span class="c" style="right:405.5px">250 000.00</span>
<span class="c" style="left:1267.5px">Land</span>
<span class="c" style="left:1367px">Rural</span>
<span class="c" style="left:1557.5px">Alice Smith</span>
</div>
<div class="row" style="top:381.95px">
<span class="c" style="left:8px;letter-spacing:-1.05px">2222 Gardenia St</span>
<span class="c" style="left:806px">Charming cottage with a beautiful garden.</span>
<span class="c" style="right:405.5px">315 000.00</span>
<span class="c" style="left:1267.5px">House</span>
<span class="c" style="left:1367px">Suburbia</span>
<span class="c" style="left:1557.5px">Charlie Brown</span>
</div>
<div class="row alt" style="top:409.20px">
<span class="c" style="left:8px;letter-spacing:-1.05px">2323 Skyline Apt</span>
<span class="c" style="left:806px">High-rise apartment with breathtaking city skyline views.</span>
<span class="c" style="right:405.5px">700 000.00</span>
<span class="c" style="left:1267.5px">Apartment</span>
<span class="c" style="left:1367px">Downtown</span>
<span class="c" style="left:1557.5px">Bob Johnson</span>
</div>
<div class="row" style="top:436.45px">
<span class="c" style="left:8px;letter-spacing:-1.05px">2424 Beachfront Condo</span>
<span class="c" style="right:405.5px">520 000.00</span>
<span class="c" style="left:1267.5px">Condo</span>
<span class="c" style="left:1367px">Coastal</span>
<span class="c" style="left:1557.5px">Alice Smith</span>
</div>
<div class="row alt" style="top:463.70px">
<span class="c" style="left:8px;letter-spacing:-1.05px">2525 Forest Retreat</span>
<span class="c" style="right:405.5px">340 000.00</span>
<span class="c" style="left:1267.5px">House</span>
<span class="c" style="left:1367px">Mountain</span>
<span class="c" style="left:1557.5px">Charlie Brown</span>
</div>
<div class="row" style="top:490.95px">
<span class="c" style="left:8px;letter-spacing:-1.05px">2626 Meadow View</span>
<span class="c" style="right:405.5px">290 000.00</span>
<span class="c" style="left:1267.5px">House</span>
<span class="c" style="left:1367px">Rural</span>
<span class="c" style="left:1557.5px">Alice Smith</span>
</div>
<div class="row alt" style="top:518.20px">
<span class="c" style="left:8px;letter-spacing:-1.05px">2727 Urban Loft</span>
<span class="c" style="right:405.5px">410 000.00</span>
<span class="c" style="left:1267.5px">Apartment</span>
<span class="c" style="left:1367px">Downtown</span>
<span class="c" style="left:1557.5px">Bob Johnson</span>
</div>
<div class="row" style="top:545.45px">
<span class="c" style="left:8px;letter-spacing:-1.05px">2828 Riverfront Condo</span>
<span class="c" style="right:405.5px">370 000.00</span>
<span class="c" style="left:1267.5px">Condo</span>
<span class="c" style="left:1367px">Coastal</span>
<span class="c" style="left:1557.5px">Alice Smith</span>
</div>
<div class="row alt" style="top:572.70px">
<span class="c" style="left:8px;letter-spacing:-1.05px">2929 Summit Townhouse</span>
<span class="c" style="right:405.5px">390 000.00</span>
<span class="c" style="left:1267.5px">Townhouse</span>
<span class="c" style="left:1367px">Mountain</span>
<span class="c" style="left:1557.5px">Charlie Brown</span>
</div>
<div class="row" style="top:599.95px">
<span class="c" style="left:8px;letter-spacing:-1.05px">303 Pine Lane</span>
<span class="c" style="right:405.5px">275 000.00</span>
<span class="c" style="left:1267.5px">Condo</span>
<span class="c" style="left:1367px">Suburbia</span>
<span class="c" style="left:1557.5px">Alice Smith</span>
</div>
<div class="row alt" style="top:627.20px">
<span class="c" style="left:8px;letter-spacing:-1.05px">3030 Business Park</span>
<span class="c" style="left:806px">Office building in a thriving business park.</span>
<span class="c" style="right:405.5px">1 200 000.00</span>
<span class="c" style="left:1267.5px">Commercial</span>
<span class="c" style="left:1367px">Downtown</span>
<span class="c" style="left:1557.5px">Bob Johnson</span>
</div>
<div class="row" style="top:654.45px">
<span class="c" style="left:8px;letter-spacing:-1.05px">3131 Vineyard Land</span>
<span class="c" style="left:806px">Land suitable for vineyard cultivation.</span>
<span class="c" style="right:405.5px">300 000.00</span>
<span class="c" style="left:1267.5px">Land</span>
<span class="c" style="left:1367px">Rural</span>
<span class="c" style="left:1557.5px">Alice Smith</span>
</div>
</div>
<div id="vsb"><div></div></div>
<div id="pg"><svg class="abs" style="left:7.699999999999989px;top:7.600000000000023px" width="13" height="16" viewBox="0 0 13 16"><rect x="0" y="1" width="2.6" height="14" fill="#b5bff0"/><path d="M12.6 1V15L3.6 8Z" fill="#b5bff0"/></svg>
<svg class="abs" style="left:35.89999999999999px;top:7.600000000000023px" width="13" height="16" viewBox="0 0 13 16"><path d="M8.5 1.5V14.5L0.5 8Z" fill="#b5bff0"/></svg>
<div class="sep" style="left:58.29999999999999px;top:6.600000000000023px;height:18px;background:#cfcfcf"></div>
<span class="abs" style="left:69.1px;top:5.600000000000023px;line-height:20px;color:#444;white-space:nowrap;letter-spacing:-1.4px">Page</span>
<div class="abs" style="left:111.49999999999999px;top:4.000000000000023px;width:62px;height:22.6px;background:#fff;border:1px solid #cfcfcf;line-height:20px;padding-left:3px;color:#444">1</div>
<span class="abs" style="left:181.2px;top:5.600000000000023px;line-height:20px;color:#444;white-space:nowrap">of 2</span>
<div class="sep" style="left:215.2px;top:6.600000000000023px;height:18px;background:#cfcfcf"></div>
<svg class="abs" style="left:227.7px;top:7.600000000000023px" width="14" height="16" viewBox="0 0 14 16"><defs><linearGradient id="g2271512" x1="0" y1="0" x2="1" y2="1"><stop offset="0" stop-color="#6f86f2"/><stop offset="1" stop-color="#3a4fd0"/></linearGradient></defs><path d="M0.5 1.2V14.8L9 8Z" fill="url(#g2271512)"/></svg>
<svg class="abs" style="left:252.89999999999998px;top:7.600000000000023px" width="14" height="16" viewBox="0 0 14 16"><defs><linearGradient id="g2521512" x1="0" y1="0" x2="1" y2="1"><stop offset="0" stop-color="#6f86f2"/><stop offset="1" stop-color="#3a4fd0"/></linearGradient></defs><path d="M0.4 1V15L9.4 8Z" fill="url(#g2521512)"/><rect x="10.2" y="1" width="2.8" height="14" fill="url(#g2521512)"/></svg>
<div class="sep" style="left:276.0px;top:6.600000000000023px;height:18px;background:#cfcfcf"></div>
<svg class="abs" style="left:284.9px;top:7.000000000000023px" width="18.4" height="18" viewBox="0 0 18.4 18"><defs><linearGradient id="rf72" x1="0" y1="0" x2="1" y2="1"><stop offset="0" stop-color="#4672da"/><stop offset="1" stop-color="#7aa4ee"/></linearGradient></defs><g fill="none" stroke="url(#rf72)" stroke-width="3"><path d="M3.200 8.400A6.200 6.200 0 0 1 14.600 5.800"/><path d="M15.200 9.800A6.200 6.200 0 0 1 3.800 12.400"/></g><path d="M17.900 3V9.800H10.800Z" fill="#7fa8f0"/><path d="M0.300 15.200V8.400H7.400Z" fill="#6f9aea"/></svg>
<div class="sep" style="left:310.4px;top:6.600000000000023px;height:18px;background:#cfcfcf"></div>
<svg class="abs" style="left:317.7px;top:8.300000000000022px" width="18.6" height="15.4" viewBox="0 0 18.6 15.4"><path d="M0.200 0.400H6.800L9.600 4.400L13.200 0.400H16.600L11.600 6.400L13.400 7L12 8L15 8.800L13.600 10L18.400 15H11.800L8.600 10.800L5.400 15H0.400L6.400 7.600Z" fill="#4f9e34"/><path d="M3.200 1.600L11.600 12.200" stroke="#a8e088" stroke-width="1.500"/><path d="M15.200 1.200L4 14" stroke="#6cb84c" stroke-width="1.200"/></svg>
<svg class="abs" style="left:344.9px;top:7.000000000000023px" width="18.4" height="18" viewBox="0 0 18.4 18"><path d="M0.800 1.800H2.900V11.700L5.900 12L0.800 17.200Z" fill="#8ccc60"/><rect x="5.400" y="2.400" width="9" height="3.600" fill="#fff" stroke="#5c94ee" stroke-width="1.400"/><rect x="5.400" y="6" width="11.600" height="3.600" fill="#fff" stroke="#5c94ee" stroke-width="1.400"/></svg>
<span class="abs" style="right:12px;top:5.600000000000023px;line-height:20px;color:#444;white-space:nowrap">Displaying 1 - 25 of 40</span></div>
</div>
<div id="vw">
<svg class="abs" style="left:6.399999999999977px;top:7.699999999999989px" width="18" height="16" viewBox="0 0 18 16"><rect x="0" y="0" width="18" height="16" rx="2" fill="#fff" fill-opacity="0.25"/><g fill="#fff"><rect x="1.5" y="1.5" width="3.6" height="3.4"/><rect x="6.3" y="1.5" width="10.4" height="3.4"/><rect x="1.5" y="6.3" width="3.6" height="3.4"/><rect x="6.3" y="6.3" width="10.4" height="3.4"/><rect x="1.5" y="11.1" width="3.6" height="3.4"/><rect x="6.3" y="11.1" width="10.4" height="3.4"/></g></svg>
<span class="abs" style="left:31.399999999999977px;top:5px;line-height:20px;color:#f4f9fe">Viewings</span>
<i class="abs" style="left:98.20000000000005px;top:11.5px;width:0;height:0;border-left:5.3px solid transparent;border-right:5.3px solid transparent;border-top:6.6px solid #fff"></i>
<svg class="abs" style="left:547px;top:5px" width="20.2" height="20.2" viewBox="0 0 20.2 20.2"><circle cx="10.1" cy="10.1" r="10.0" fill="#e4f0fb"/><rect x="4.00" y="9.05" width="12.2" height="2.1" fill="#72b5f0"/></svg><svg class="abs" style="left:574px;top:5px" width="20.2" height="20.2" viewBox="0 0 20.2 20.2"><circle cx="10.1" cy="10.1" r="10.0" fill="#e4f0fb"/><path d="M6.70 5.10H15.10V12.20Z" fill="#72b5f0"/><path d="M5.10 7.50V15.10H12.50Z" fill="#72b5f0"/></svg><svg class="abs" style="left:602px;top:5px" width="20.2" height="20.2" viewBox="0 0 20.2 20.2"><circle cx="10.1" cy="10.1" r="10.0" fill="#e4f0fb"/><path d="M4.90 4.90L15.30 15.30M15.30 4.90L4.90 15.30" stroke="#72b5f0" stroke-width="2" fill="none"/></svg>
<div id="vwb">
</div>
<svg class="abs" style="left:12.2px;top:37.6px" width="18" height="18" viewBox="0 0 18 18"><defs><linearGradient id="ga2" x1="0" y1="0" x2="1" y2="1"><stop offset="0" stop-color="#b9e8a0"/><stop offset="0.5" stop-color="#8fd06e"/><stop offset="1" stop-color="#78bd5a"/></linearGradient></defs><rect x="0.5" y="0.5" width="17" height="17" rx="1" fill="url(#ga2)" stroke="#74b45a"/><path d="M7.5 3.5H10.5V7.5H14.5V10.5H10.5V14.5H7.500V10.5H3.500V7.500H7.500Z" fill="#fff" stroke="#6aad52" stroke-width="0.7"/><rect x="8.3" y="8.3" width="1.4" height="1.4" fill="#b5e29e"/></svg><svg class="abs" style="left:45.5px;top:38.6px" width="17" height="17" viewBox="0 0 17 17"><path d="M0.8 16L1.8 12L12.6 0.8L16.2 4.2L5 15Z" fill="#8fd468" stroke="#62a843" stroke-width="0.9"/><path d="M0.8 16L1.6 13L4 15.2Z" fill="#3c4a34"/></svg><svg class="abs" style="left:77.8px;top:38.2px" width="17" height="17" viewBox="0 0 17 17"><defs><linearGradient id="gd2" x1="0" y1="0" x2="1" y2="1"><stop offset="0" stop-color="#e9a3ab"/><stop offset="1" stop-color="#cf4453"/></linearGradient></defs><path d="M3.6 0.5L8.5 5.2L13.4 0.5L16.5 3.6L11.8 8.5L16.5 13.4L13.4 16.5L8.5 11.8L3.6 16.5L0.5 13.4L5.2 8.5L0.5 3.6Z" fill="url(#gd2)"/></svg>
<div class="sep" style="left:105.39999999999998px;top:37px;height:18px"></div>
<div class="srch" style="left:493px;top:34px;width:125px;height:24.5px;line-height:22px;padding-left:3.5px">Search...</div>
<div id="vgh"><span style="left:8.200000000000045px">Datetime</span><svg class="abs" style="left:67.79999999999995px;top:10.5px" width="12" height="6" viewBox="0 0 12 6"><path d="M0 0L6 6L12 0Z" fill="#a0a0a0"/></svg>
<i style="left:127.39999999999998px"></i><span style="left:135.39999999999998px">Client</span>
<i style="left:234.29999999999995px"></i><span style="left:242.79999999999995px">Agent</span>
<i style="left:342.4px"></i><span style="left:350.6px">Notes</span></div>
<div id="vrow"><span style="left:8.200000000000045px">2023-10-30 15:00</span><span style="left:135.39999999999998px;letter-spacing:-1.15px">Jessica Garcia</span><span style="left:242.79999999999995px">Charlie Brown</span><span style="left:350.6px">Client inquired about the community pool.</span></div>
<div id="vpg"><svg class="abs" style="left:7.899999999999977px;top:7.600000000000023px" width="13" height="16" viewBox="0 0 13 16"><rect x="0" y="1" width="2.6" height="14" fill="#b5bff0"/><path d="M12.6 1V15L3.6 8Z" fill="#b5bff0"/></svg>
<svg class="abs" style="left:36.09999999999998px;top:7.600000000000023px" width="13" height="16" viewBox="0 0 13 16"><path d="M8.5 1.5V14.5L0.5 8Z" fill="#b5bff0"/></svg>
<div class="sep" style="left:58.49999999999998px;top:6.600000000000023px;height:18px;background:#cfcfcf"></div>
<span class="abs" style="left:69.29999999999998px;top:5.600000000000023px;line-height:20px;color:#444;white-space:nowrap;letter-spacing:-1.4px">Page</span>
<div class="abs" style="left:111.69999999999997px;top:4.000000000000023px;width:62px;height:22.6px;background:#fff;border:1px solid #cfcfcf;line-height:20px;padding-left:3px;color:#444">1</div>
<span class="abs" style="left:181.39999999999998px;top:5.600000000000023px;line-height:20px;color:#444;white-space:nowrap">of 1</span>
<div class="sep" style="left:215.39999999999998px;top:6.600000000000023px;height:18px;background:#cfcfcf"></div>
<svg class="abs" style="left:227.89999999999998px;top:7.600000000000023px" width="14" height="16" viewBox="0 0 14 16"><defs><linearGradient id="g2271501" x1="0" y1="0" x2="1" y2="1"><stop offset="0" stop-color="#b5bff0"/><stop offset="1" stop-color="#b5bff0"/></linearGradient></defs><path d="M0.5 1.2V14.8L9 8Z" fill="url(#g2271501)"/></svg>
<svg class="abs" style="left:253.09999999999997px;top:7.600000000000023px" width="14" height="16" viewBox="0 0 14 16"><defs><linearGradient id="g2531501" x1="0" y1="0" x2="1" y2="1"><stop offset="0" stop-color="#b5bff0"/><stop offset="1" stop-color="#b5bff0"/></linearGradient></defs><path d="M0.4 1V15L9.4 8Z" fill="url(#g2531501)"/><rect x="10.2" y="1" width="2.8" height="14" fill="url(#g2531501)"/></svg>
<div class="sep" style="left:276.2px;top:6.600000000000023px;height:18px;background:#cfcfcf"></div>
<svg class="abs" style="left:285.09999999999997px;top:7.000000000000023px" width="18.4" height="18" viewBox="0 0 18.4 18"><defs><linearGradient id="rf71" x1="0" y1="0" x2="1" y2="1"><stop offset="0" stop-color="#4672da"/><stop offset="1" stop-color="#7aa4ee"/></linearGradient></defs><g fill="none" stroke="url(#rf71)" stroke-width="3"><path d="M3.200 8.400A6.200 6.200 0 0 1 14.600 5.800"/><path d="M15.200 9.800A6.200 6.200 0 0 1 3.800 12.400"/></g><path d="M17.900 3V9.800H10.800Z" fill="#7fa8f0"/><path d="M0.300 15.200V8.400H7.400Z" fill="#6f9aea"/></svg>
<div class="sep" style="left:310.59999999999997px;top:6.600000000000023px;height:18px;background:#cfcfcf"></div>
<svg class="abs" style="left:317.9px;top:8.300000000000022px" width="18.6" height="15.4" viewBox="0 0 18.6 15.4"><path d="M0.200 0.400H6.800L9.600 4.400L13.200 0.400H16.600L11.600 6.400L13.400 7L12 8L15 8.800L13.600 10L18.400 15H11.800L8.600 10.800L5.400 15H0.400L6.400 7.600Z" fill="#4f9e34"/><path d="M3.200 1.600L11.600 12.200" stroke="#a8e088" stroke-width="1.500"/><path d="M15.200 1.200L4 14" stroke="#6cb84c" stroke-width="1.200"/></svg>
<svg class="abs" style="left:345.09999999999997px;top:7.000000000000023px" width="18.4" height="18" viewBox="0 0 18.4 18"><path d="M0.800 1.800H2.900V11.700L5.900 12L0.800 17.200Z" fill="#8ccc60"/><rect x="5.400" y="2.400" width="9" height="3.600" fill="#fff" stroke="#5c94ee" stroke-width="1.400"/><rect x="5.400" y="6" width="11.600" height="3.600" fill="#fff" stroke="#5c94ee" stroke-width="1.400"/></svg>
<span class="abs" style="right:14px;top:5.600000000000023px;line-height:20px;color:#444;white-space:nowrap">Displaying 1 - 1 of 1</span></div>
</div>
<svg class="abs" style="left:1037px;top:603px;z-index:30" width="14" height="21" viewBox="0 0 14 21"><path d="M1 1V17L4.8 13.4L7.4 19.6L9.8 18.6L7.2 12.6H12.4Z" fill="#fff" stroke="#000" stroke-width="1.1" stroke-linejoin="round"/></svg>
<div id="note"><span class="abs" style="left:4.5px;top:5px;line-height:20px;font-size:15.8px;color:#fff;white-space:nowrap">Connected in 190 ms</span><svg class="abs" style="left:359px;top:5px" width="11" height="11" viewBox="0 0 11 11"><path d="M1.5 1.5L9.5 9.5M9.5 1.5L1.5 9.5" stroke="#fff" stroke-width="2.6"/></svg></div>
</div>
<div id="pty">
<div id="ptyt">
<svg class="abs" style="left:9px;top:8px" width="21" height="21" viewBox="0 0 21 21">
<rect x="9" y="1" width="10" height="8.5" fill="#d8d8d8" stroke="#222" stroke-width="0.9"/><rect x="10.6" y="2.4" width="6.8" height="5.4" fill="#1a35d8"/>
<path d="M8.5 11.5H19.5L20 13.5H8Z" fill="#c8c8c8" stroke="#222" stroke-width="0.8"/>
<rect x="2" y="8.5" width="10" height="8.5" fill="#d8d8d8" stroke="#222" stroke-width="0.9"/><rect x="3.6" y="9.9" width="6.8" height="5.4" fill="#1a35d8"/>
<path d="M1 18H12.5L13 20.2H0.6Z" fill="#c8c8c8" stroke="#222" stroke-width="0.8"/>
<path d="M14.5 2.5L8 9.5H10.8L6 15.5L13.5 8.6H10.6Z" fill="#ffe820" stroke="#7a6a00" stroke-width="0.5"/>
</svg>
<span class="abs" style="left:36px;top:9.5px;font-size:15.3px;line-height:20px;color:#1a1a1a;white-space:nowrap">root@yvnmijfarn: ~/myapp</span>
<svg class="abs" style="left:819px;top:10px" width="132" height="18" viewBox="0 0 132 18"><g fill="none" stroke="#1a1a1a" stroke-width="1.2"><path d="M1 8.2H13"/><rect x="60" y="2.9" width="10.8" height="10.8" rx="1.6"/><path d="M118 2L130 14M130 2L118 14"/></g></svg>
</div>
<div id="ptyb"><pre>

Oracle is a registered trademark of Oracle Corporation and/or its
affiliates. Other names may be trademarks of their respective
owners.

Type 'help;' or '\h' for help. Type '\c' to clear the current input statement.

mysql&gt; <i></i></pre></div>
<div class="abs" style="left:962px;top:125.5px;width:3px;height:53px;border-radius:1.5px;background:#8b8b8b"></div>
</div>
<div id="task"><svg class="abs" style="left:640px;top:15.799999999999955px" width="29" height="29.4" viewBox="0 0 29 29.4"><defs><linearGradient id="wl" x1="0" y1="0" x2="1" y2="1"><stop offset="0" stop-color="#7fd8ff"/><stop offset="1" stop-color="#169cf2"/></linearGradient></defs><g fill="url(#wl)"><rect x="0" y="0" width="13.8" height="14"/><rect x="15.2" y="0" width="13.8" height="14"/><rect x="0" y="15.4" width="13.8" height="14"/><rect x="15.2" y="15.4" width="13.8" height="14"/></g></svg>
<svg class="abs" style="left:697px;top:14.700000000000045px" width="30.4" height="30.4" viewBox="0 0 30.4 30.4"><g transform="translate(15.2,15.2)"><circle r="15" fill="#fff"/>
<path d="M0 0L-12.99 -7.5A15 15 0 0 1 12.99 -7.5Z" fill="#e33b2e"/>
<path d="M0 0L12.99 -7.5A15 15 0 0 1 0 15Z" fill="#fbc116"/>
<path d="M0 0L0 15A15 15 0 0 1 -12.99 -7.5Z" fill="#2da94f"/>
<path d="M-12.99 -7.5L-6 -7.5L0 -7.5L12.99 -7.5A15 15 0 0 0 -12.99 -7.5Z" fill="#e33b2e"/>
<path d="M0 -7.5H12.99A15 15 0 0 1 0 15L6.5 3.75Z" fill="#fbc116"/>
<path d="M-6.5 3.75L0 15A15 15 0 0 1 -12.99 -7.5Z" fill="#2da94f"/>
<circle r="7.3" fill="#fff"/><circle r="5.8" fill="#4285f4"/></g></svg>
<div class="abs" style="left:708.4px;top:50px;width:7.6px;height:3.6px;border-radius:2px;background:#8d8d8d"></div>
<svg class="abs" style="left:752px;top:15.200000000000045px" width="28.4" height="28" viewBox="0 0 28.4 28"><rect x="0" y="0" width="28.4" height="28" fill="#061018"/><rect x="0.6" y="0.6" width="27.2" height="23.5" fill="#0000c4" stroke="#00e6e6" stroke-width="1.2"/><path d="M14.2 0.6V24M9.3 1V21M23 1V21M0.6 20.6H27.8" stroke="#00e6e6" stroke-width="1"/><g stroke="#4fd8ff" stroke-width="1"><path d="M2.5 5H8M2.5 7.5H8M2.5 10H8M2.5 12.5H8M10.8 5H12.6M10.8 7.5H12.6M10.8 10H12.6M16 5H21.5M16 7.5H21.5M16 10H21.5M24.3 5H26M24.3 7.5H26"/></g><path d="M2.5 2.7H7.5M10.5 2.7H12.8M16.5 2.7H21M24.3 2.7H26" stroke="#ffe14a" stroke-width="1"/><path d="M2 26.3H5.5M7 26.3H10.5M12 26.3H15.5M17 26.3H20.5M22 26.3H26" stroke="#00a0a0" stroke-width="1.8"/></svg>
<svg class="abs" style="left:807.5px;top:15.5px" width="28.4" height="28.4" viewBox="0 0 28.4 28.4"><circle cx="14.2" cy="14.2" r="14.2" fill="#f8f8f8"/><g stroke-linecap="round" stroke-width="3.5" fill="none"><path d="M5.700 11.500H10.900" stroke="#36c5f0"/><path d="M11 6.300V6.500" stroke="#36c5f0"/><path d="M16.300 6.400V10.900" stroke="#2eb67d"/><path d="M21.300 11.300H21.400" stroke="#2eb67d"/><path d="M17 17.300H22.200" stroke="#ecb22e"/><path d="M16.600 22.200V22.300" stroke="#ecb22e"/><path d="M10.900 17.600V22.100" stroke="#e01e5a"/><path d="M5.700 17.200H5.800" stroke="#e01e5a"/></g></svg>
<svg class="abs" style="left:861.5px;top:15px" width="30" height="30" viewBox="0 0 30 30"><path d="M1 8L8 0.5L22 5L29 3L30 17L24 24L26 28L17 30L7 24L2 22Z" fill="#a83bd8"/><path d="M1 8L8 0.5L16 3L9 13Z" fill="#e0369a"/><path d="M22 5L29 3L30 17L24 24Z" fill="#8a3be8"/><path d="M17 30L7 24L14 20L26 28Z" fill="#6b57ff"/>
<rect x="6.3" y="5.8" width="17.4" height="17.4" fill="#000"/><text x="7.6" y="15.6" font-family="Liberation Sans" font-weight="bold" font-size="10" fill="#fff" textLength="13.6" lengthAdjust="spacingAndGlyphs">PS</text><rect x="8" y="19.3" width="6.5" height="1.3" fill="#fff"/></svg>
<svg class="abs" style="left:919px;top:15px" width="25.4" height="30" viewBox="0 0 25.4 30"><path d="M0 14.400L3 10.200C5 7 8 5.600 10.500 5.200L16.300 0.300L18.600 5.600C22.500 8 24.800 11.500 24.600 15.500C24.500 19.500 23 22.500 21.500 24.500L17.300 29.600C15.800 28.500 15 27 15.400 26L13.200 21.400C15 21.800 16.800 21.300 18 20.300C19 19 19.200 17.500 18.600 16.200C17.500 17.500 16 18.200 14.600 18C14.800 16.800 14.400 15.400 13.600 14.600C11 15.200 8 15.300 6 15Z" fill="#2f8ff0"/></svg>
<svg class="abs" style="left:971.5px;top:15px" width="31" height="30.5" viewBox="0 0 31 30.5"><path d="M0.5 0.8H11L7.6 4.2L11.400 8L8 11.400L4.200 7.600L0.500 11.300Z" fill="#1a9bf0"/>
<path d="M30.5 29.8H19.5L23 26.300L18.200 21.500L21.800 17.900L26.600 22.700L30.500 18.800Z" fill="#3cc81e"/>
<path d="M9.8 14V10.6A5 5 0 0 1 19.8 10.6V14" fill="none" stroke="#d8d8d8" stroke-width="2.6"/>
<rect x="7" y="13.6" width="15.6" height="10.6" rx="1" fill="#c4c4c4"/><rect x="7" y="13.6" width="15.6" height="4" fill="#e0e0e0"/></svg>
<svg class="abs" style="left:1028px;top:16px" width="27" height="25.4" viewBox="0 0 27 25.4"><rect x="1" y="1" width="25" height="23.4" rx="4.2" fill="#001e36" stroke="#31c5f0" stroke-width="1.8"/><text x="5.2" y="18.3" font-family="Liberation Sans" font-weight="bold" font-size="14.5" fill="#a8dcff" textLength="16.6" lengthAdjust="spacingAndGlyphs">Ps</text></svg>
<svg class="abs" style="left:1081px;top:15px" width="31.4" height="30.6" viewBox="0 0 31.4 30.6"><g transform="translate(15.7,15.3)"><path d="M0 -15L7.3 -7.7L0 -0.4L-7.3 -7.7Z" fill="#f0767a"/><path d="M-15 0L-7.7 -7.3L-0.4 0L-7.7 7.3Z" fill="#6f9fea"/><path d="M15 0L7.7 -7.3L0.4 0L7.7 7.3Z" fill="#6db255"/><path d="M0 15L7.3 7.7L0 0.4L-7.3 7.7Z" fill="#f2d56b"/>
<g stroke="#1c1c1c" stroke-width="1.7" fill="none"><path d="M-4.5 -10L0 -5.5V8.5"/><path d="M0.5 -4L6 1.2"/></g><circle cx="0" cy="-5.2" r="1.9" fill="#1c1c1c"/><circle cx="0" cy="8.4" r="2.1" fill="#1c1c1c"/><circle cx="5.8" cy="1.2" r="2" fill="#1c1c1c"/></g></svg>
<svg class="abs" style="left:1139px;top:15px" width="24" height="30.4" viewBox="0 0 24 30.4"><rect x="0" y="0" width="24" height="30.4" rx="2" fill="#707c8c"/><rect x="1.2" y="1.2" width="21.6" height="28" rx="1.2" fill="#8b9bb0"/><rect x="3.6" y="3.4" width="16.8" height="4.8" fill="#5ec8f2"/>
<g fill="#d3d9e2"><rect x="3.6" y="10.6" width="4.6" height="4.6"/><rect x="9.7" y="10.6" width="4.6" height="4.6"/><rect x="15.8" y="10.6" width="4.6" height="4.6"/><rect x="3.6" y="16.8" width="4.6" height="4.6"/><rect x="9.7" y="16.8" width="4.6" height="4.6"/><rect x="3.6" y="23" width="4.6" height="4.6"/><rect x="9.7" y="23" width="4.6" height="4.6"/></g><rect x="15.8" y="16.8" width="4.6" height="10.8" fill="#1f4f9e"/></svg>
<svg class="abs" style="left:1192px;top:18.299999999999955px" width="30" height="23" viewBox="0 0 30 23"><rect x="0.8" y="0.8" width="28.4" height="16.6" fill="#fff" stroke="#9c9c9c" stroke-width="1.6"/><rect x="12.4" y="18" width="5.2" height="2.6" fill="#9a9a9a"/><rect x="8.6" y="20.4" width="12.8" height="2.2" fill="#a8a8a8"/><path d="M11.8 6V8.4M18.2 6V8.4" stroke="#666" stroke-width="1"/><path d="M10.6 10.4C12.5 13 17.5 13 19.4 10.4" fill="none" stroke="#666" stroke-width="1"/></svg>
<div class="abs" style="left:1203px;top:50.299999999999955px;width:8.4px;height:3.6px;border-radius:2px;background:#9a9890"></div>
<div class="abs" style="left:1237.2px;top:5px;width:50px;height:50px;border-radius:5px;background:rgba(255,255,255,0.075);border:1px solid rgba(255,255,255,0.04)"></div>
<svg class="abs" style="left:1247.5px;top:15.5px" width="30" height="29.5" viewBox="0 0 30 29.5"><rect x="13" y="0.8" width="13.6" height="10.6" fill="#dadada" stroke="#1a1a1a" stroke-width="0.9"/><rect x="15.2" y="2.6" width="9.2" height="6.8" fill="#1a2fe0"/>
<path d="M12 13.2H28L29.4 16.4H11Z" fill="#cfcfcf" stroke="#1a1a1a" stroke-width="0.8"/>
<rect x="3" y="13.4" width="13.6" height="10.6" fill="#dadada" stroke="#1a1a1a" stroke-width="0.9"/><rect x="5.2" y="15.2" width="9.2" height="6.8" fill="#1a2fe0"/>
<path d="M1.4 25.6H18.4L19.4 29H0.6Z" fill="#cfcfcf" stroke="#1a1a1a" stroke-width="0.8"/>
<path d="M22.5 3L10.5 13.5H15L7.5 22L20.5 12H16Z" fill="#ffee1a" stroke="#6a5c00" stroke-width="0.5"/></svg>
<div class="abs" style="left:1252.3px;top:50.299999999999955px;width:19.6px;height:4px;border-radius:2px;background:#4cc2ff"></div>
<svg class="abs" style="left:1600px;top:25.5px" width="15" height="9.4" viewBox="0 0 15 9.4"><path d="M1 8.2L7.5 1.6L14 8.2" fill="none" stroke="#fff" stroke-width="1.7"/></svg>
<span class="tt" style="left:1640px;top:21px;letter-spacing:-1.2px">ENG</span>
<svg class="abs" style="left:1692px;top:22.40000000000009px" width="21" height="15.6" viewBox="0 0 21 15.6"><g fill="none" stroke="#fff" stroke-width="1.5" stroke-linecap="round"><path d="M1.2 5.6C6.5 0 14.5 0 19.8 5.6"/><path d="M4.4 8.8C8 5 13 5 16.6 8.8"/><path d="M7.4 11.8C9.3 10 11.7 10 13.6 11.8"/></g><circle cx="10.5" cy="14" r="1.4" fill="#fff"/></svg>
<svg class="abs" style="left:1721.5px;top:22.799999999999955px" width="18" height="15" viewBox="0 0 18 15"><path d="M1 5.2H4L8 1.6V13.4L4 9.8H1Z" fill="none" stroke="#fff" stroke-width="1.3" stroke-linejoin="round"/><path d="M10.6 5C11.8 6.4 11.8 8.6 10.6 10M13 3C15.2 5.6 15.2 9.4 13 12" fill="none" stroke="#fff" stroke-width="1.3" stroke-linecap="round"/><path d="M15.4 1.4C18 4.8 18 10.2 15.4 13.6" fill="none" stroke="#8a8f9c" stroke-width="1.2" stroke-linecap="round"/></svg>
<svg class="abs" style="left:1751.5px;top:20.59999999999991px" width="21" height="17.4" viewBox="0 0 21 17.4"><rect x="3" y="5" width="14.8" height="9.6" rx="2" fill="none" stroke="#fff" stroke-width="1.3"/><path d="M18.6 8V11.6" stroke="#fff" stroke-width="1.8" stroke-linecap="round"/><rect x="5.6" y="7.4" width="9.6" height="4.8" rx="0.8" fill="#fff"/><path d="M5 0.6L1.2 6.6H3.8L2.6 11L6.8 4.6H4.2Z" fill="#fff" stroke="#1b2a50" stroke-width="0.5"/></svg>
<span class="tt" style="right:52.5px;top:10px;letter-spacing:-0.65px">19:01</span>
<span class="tt" style="right:52.5px;top:30px;letter-spacing:-0.45px">26.10.2025</span>
<svg class="abs" style="left:1875.5px;top:20.59999999999991px" width="18" height="19" viewBox="0 0 18 19"><path d="M3 13.6C4.6 12 4.6 10 4.6 7.6C4.6 4.6 6.4 2.6 8.6 2.6" fill="none" stroke="#fff" stroke-width="1.3" stroke-linecap="round"/><path d="M3 13.6H14.2C13 12.4 12.8 11 12.7 9.6" fill="none" stroke="#fff" stroke-width="1.3" stroke-linecap="round"/><path d="M6.6 15.8C7.4 17.6 9.8 17.6 10.6 15.8" fill="none" stroke="#fff" stroke-width="1.3" stroke-linecap="round"/><path d="M9.6 5.2H12.6L9.6 8.8H12.8" fill="none" stroke="#fff" stroke-width="1.1"/><path d="M13.6 0.8H16.6L13.6 4H16.8" fill="none" stroke="#fff" stroke-width="1.1"/></svg></div>
</body></html>
